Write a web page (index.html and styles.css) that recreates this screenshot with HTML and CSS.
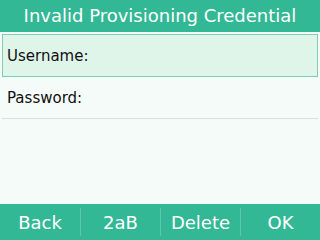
FILE: index.html
```html
<!DOCTYPE html>
<html>
<head>
<meta charset="utf-8">
<link rel="stylesheet" href="styles.css">
</head>
<body>
<div class="screen">
  <div class="title">Invalid Provisioning Credential</div>
  <div class="content">
    <div class="field selected">Username:</div>
    <div class="field">Password:</div>
  </div>
  <div class="softkeys">
    <div class="key">Back</div>
    <div class="key">2aB</div>
    <div class="key">Delete</div>
    <div class="key">OK</div>
  </div>
</div>
</body>
</html>
```
FILE: styles.css
```css
html, body {
  margin: 0;
  padding: 0;
}
body {
  width: 320px;
  height: 240px;
  overflow: hidden;
  font-family: "DejaVu Sans", Verdana, sans-serif;
}
.screen {
  width: 320px;
  height: 240px;
  display: flex;
  flex-direction: column;
  background: #f5fbf8;
}
.title {
  height: 32px;
  line-height: 32px;
  background: #33b895;
  color: #ffffff;
  font-size: 18px;
  text-align: center;
  flex: none;
}
.content {
  flex: 1;
  padding: 2px 2px 0 2px;
  display: flex;
  flex-direction: column;
}
.field {
  height: 41px;
  display: flex;
  align-items: center;
  padding-left: 5px;
  font-size: 15px;
  color: #111111;
  border-bottom: 1px solid #d9dfdc;
}
.field.selected {
  height: 41px;
  padding-left: 4px;
  background: #e0f5ea;
  border: 1px solid #7dceb5;
}
.softkeys {
  height: 36px;
  flex: none;
  display: flex;
  background: #33b895;
}
.key {
  width: 80px;
  display: flex;
  align-items: center;
  justify-content: center;
  color: #ffffff;
  font-size: 18px;
  margin: 4px 0;
  padding-top: 1px;
  box-sizing: border-box;
}
.key + .key {
  border-left: 1px solid #5ec7a9;
}
```
